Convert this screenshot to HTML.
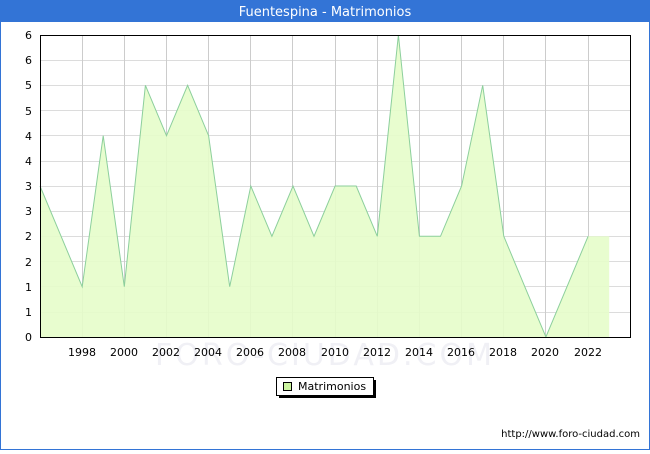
<!DOCTYPE html>
<html><head><meta charset="utf-8"><style>
body{margin:0;width:650px;height:450px;overflow:hidden;background:#fff;font-family:"DejaVu Sans","Liberation Sans",sans-serif;}
</style></head><body>
<svg width="650" height="450" xmlns="http://www.w3.org/2000/svg" font-family="DejaVu Sans, Liberation Sans, sans-serif">
<rect x="0.5" y="0.5" width="649" height="449" fill="#fff" stroke="#3374d6"/>
<rect x="0" y="0" width="650" height="22" fill="#3374d6"/>
<text x="325" y="16" fill="#fff" font-size="13" text-anchor="middle">Fuentespina - Matrimonios</text>
<g stroke="#dcdcdc" stroke-width="1">
<line x1="40" x2="630" y1="60.5" y2="60.5"/><line x1="40" x2="630" y1="85.5" y2="85.5"/><line x1="40" x2="630" y1="110.5" y2="110.5"/><line x1="40" x2="630" y1="135.5" y2="135.5"/><line x1="40" x2="630" y1="161.5" y2="161.5"/><line x1="40" x2="630" y1="186.5" y2="186.5"/><line x1="40" x2="630" y1="211.5" y2="211.5"/><line x1="40" x2="630" y1="236.5" y2="236.5"/><line x1="40" x2="630" y1="261.5" y2="261.5"/><line x1="40" x2="630" y1="286.5" y2="286.5"/><line x1="40" x2="630" y1="312.5" y2="312.5"/>
</g>
<g stroke="#cccccc">
<line x1="82.5" x2="82.5" y1="35" y2="337"/><line x1="124.5" x2="124.5" y1="35" y2="337"/><line x1="166.5" x2="166.5" y1="35" y2="337"/><line x1="208.5" x2="208.5" y1="35" y2="337"/><line x1="250.5" x2="250.5" y1="35" y2="337"/><line x1="292.5" x2="292.5" y1="35" y2="337"/><line x1="335.5" x2="335.5" y1="35" y2="337"/><line x1="377.5" x2="377.5" y1="35" y2="337"/><line x1="419.5" x2="419.5" y1="35" y2="337"/><line x1="461.5" x2="461.5" y1="35" y2="337"/><line x1="503.5" x2="503.5" y1="35" y2="337"/><line x1="545.5" x2="545.5" y1="35" y2="337"/><line x1="588.5" x2="588.5" y1="35" y2="337"/>
</g>
<polygon fill="#e5fdca" fill-opacity="0.9" points="40,337 40,186 61.1,236.3 82.2,286.7 103.2,135.7 124.3,286.7 145.4,85.3 166.5,135.7 187.6,85.3 208.6,135.7 229.7,286.7 250.8,186 271.9,236.3 293,186 314,236.3 335.1,186 356.2,186 377.3,236.3 398.4,35 419.4,236.3 440.5,236.3 461.6,186 482.7,85.3 503.8,236.3 524.8,286.7 545.9,337 567,286.7 588.1,236.3 609.2,236.3 609.2,337"/>
<polyline fill="none" stroke="#8ccf9c" stroke-width="1" points="40,186 61.1,236.3 82.2,286.7 103.2,135.7 124.3,286.7 145.4,85.3 166.5,135.7 187.6,85.3 208.6,135.7 229.7,286.7 250.8,186 271.9,236.3 293,186 314,236.3 335.1,186 356.2,186 377.3,236.3 398.4,35 419.4,236.3 440.5,236.3 461.6,186 482.7,85.3 503.8,236.3 524.8,286.7 545.9,337 567,286.7 588.1,236.3"/>
<rect x="40.5" y="35.5" width="590" height="302" fill="none" stroke="#000"/>
<text x="325" y="365" font-size="30" fill="#f0f0f5" text-anchor="middle" letter-spacing="3">FORO-CIUDAD.COM</text>
<g font-size="11" fill="#000" text-anchor="end">
<text x="32" y="341">0</text><text x="32" y="316">1</text><text x="32" y="291">1</text><text x="32" y="266">2</text><text x="32" y="240">2</text><text x="32" y="215">3</text><text x="32" y="190">3</text><text x="32" y="165">4</text><text x="32" y="140">4</text><text x="32" y="115">5</text><text x="32" y="89">5</text><text x="32" y="64">6</text><text x="32" y="39">6</text>
</g>
<g font-size="11" fill="#000" text-anchor="middle">
<text x="82" y="356">1998</text><text x="124" y="356">2000</text><text x="166" y="356">2002</text><text x="208" y="356">2004</text><text x="250" y="356">2006</text><text x="292" y="356">2008</text><text x="335" y="356">2010</text><text x="377" y="356">2012</text><text x="419" y="356">2014</text><text x="461" y="356">2016</text><text x="503" y="356">2018</text><text x="545" y="356">2020</text><text x="588" y="356">2022</text>
</g>
<rect x="279" y="380" width="97" height="18" fill="#000"/>
<rect x="276.5" y="377.5" width="97" height="18" fill="#fff" stroke="#000"/>
<rect x="283.5" y="382.5" width="8" height="8" fill="#ccf5a0" stroke="#000"/>
<text x="298" y="390" font-size="11">Matrimonios</text>
<text x="640" y="437" font-size="10" text-anchor="end">http://www.foro-ciudad.com</text>
</svg>
</body></html>
